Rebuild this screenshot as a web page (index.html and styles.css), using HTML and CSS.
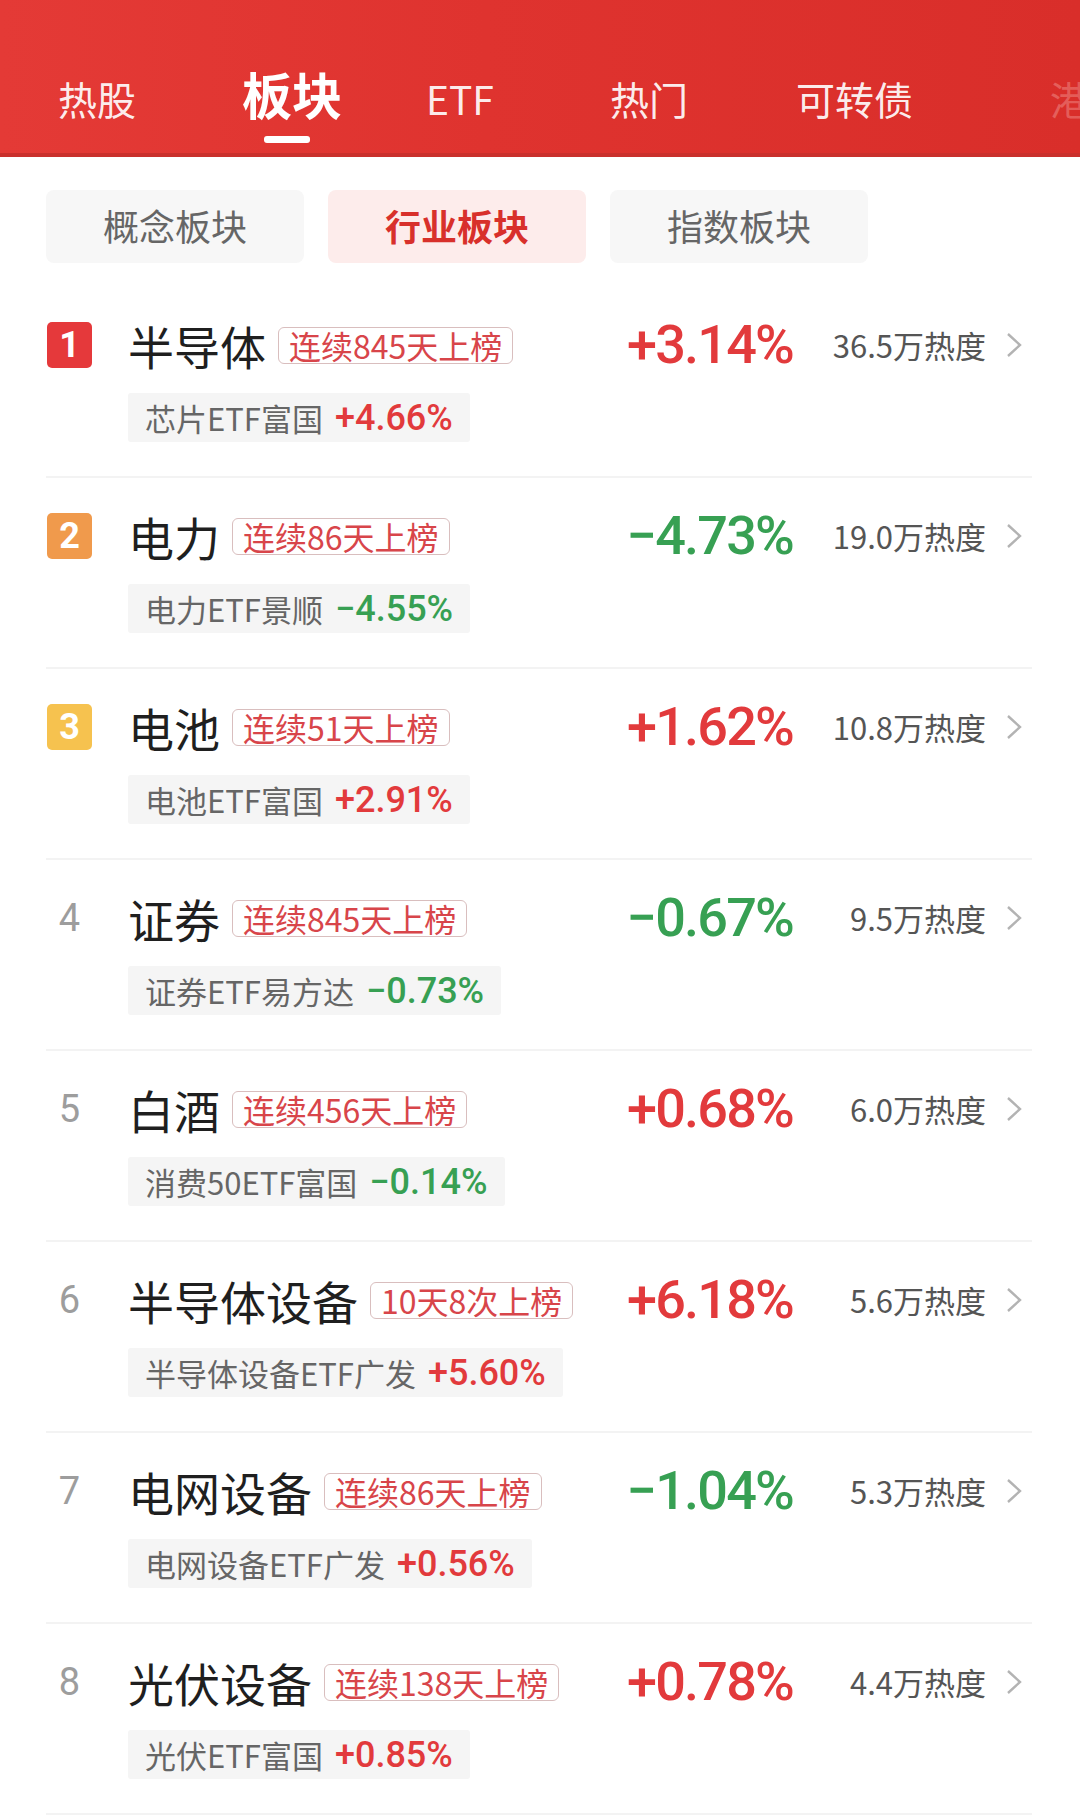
FILE: index.html
```html
<!DOCTYPE html>
<html lang="zh-CN">
<head>
<meta charset="utf-8">
<title>板块</title>
<link rel="stylesheet" href="styles.css">
</head>
<body>
<div class="header">
  <div class="tabs">
    <span class="tab">热股</span>
    <span class="tab tab-active">板块</span>
    <span class="tab tab-etf">ETF</span>
    <span class="tab tab-hot">热门</span>
    <span class="tab tab-bond">可转债</span>
    <span class="tab tab-hk">港股</span>
  </div>
  <div class="fade"></div>
</div>

<div class="subtabs">
  <div class="subtab">概念板块</div>
  <div class="subtab subtab-active">行业板块</div>
  <div class="subtab">指数板块</div>
</div>

<div class="list">
  <div class="row">
    <div class="line">
      <div class="rank"><span class="badge badge-1">1</span></div>
      <span class="name">半导体</span><span class="tag">连续845天上榜</span>
      <span class="spacer"></span>
      <span class="pct up">+3.14%</span>
      <span class="heat">36.5万热度</span>
      <svg class="chev" viewBox="0 0 16 26"><path d="M2 2 L14 13 L2 24" fill="none" stroke="#b3b3b3" stroke-width="2.4"/></svg>
    </div>
    <div class="sub"><span class="sub-label">芯片ETF富国</span><span class="sub-pct up">+4.66%</span></div>
  </div>

  <div class="row">
    <div class="line">
      <div class="rank"><span class="badge badge-2">2</span></div>
      <span class="name">电力</span><span class="tag">连续86天上榜</span>
      <span class="spacer"></span>
      <span class="pct down">−4.73%</span>
      <span class="heat">19.0万热度</span>
      <svg class="chev" viewBox="0 0 16 26"><path d="M2 2 L14 13 L2 24" fill="none" stroke="#b3b3b3" stroke-width="2.4"/></svg>
    </div>
    <div class="sub"><span class="sub-label">电力ETF景顺</span><span class="sub-pct down">−4.55%</span></div>
  </div>

  <div class="row">
    <div class="line">
      <div class="rank"><span class="badge badge-3">3</span></div>
      <span class="name">电池</span><span class="tag">连续51天上榜</span>
      <span class="spacer"></span>
      <span class="pct up">+1.62%</span>
      <span class="heat">10.8万热度</span>
      <svg class="chev" viewBox="0 0 16 26"><path d="M2 2 L14 13 L2 24" fill="none" stroke="#b3b3b3" stroke-width="2.4"/></svg>
    </div>
    <div class="sub"><span class="sub-label">电池ETF富国</span><span class="sub-pct up">+2.91%</span></div>
  </div>

  <div class="row">
    <div class="line">
      <div class="rank"><span class="num">4</span></div>
      <span class="name">证券</span><span class="tag">连续845天上榜</span>
      <span class="spacer"></span>
      <span class="pct down">−0.67%</span>
      <span class="heat">9.5万热度</span>
      <svg class="chev" viewBox="0 0 16 26"><path d="M2 2 L14 13 L2 24" fill="none" stroke="#b3b3b3" stroke-width="2.4"/></svg>
    </div>
    <div class="sub"><span class="sub-label">证券ETF易方达</span><span class="sub-pct down">−0.73%</span></div>
  </div>

  <div class="row">
    <div class="line">
      <div class="rank"><span class="num">5</span></div>
      <span class="name">白酒</span><span class="tag">连续456天上榜</span>
      <span class="spacer"></span>
      <span class="pct up">+0.68%</span>
      <span class="heat">6.0万热度</span>
      <svg class="chev" viewBox="0 0 16 26"><path d="M2 2 L14 13 L2 24" fill="none" stroke="#b3b3b3" stroke-width="2.4"/></svg>
    </div>
    <div class="sub"><span class="sub-label">消费50ETF富国</span><span class="sub-pct down">−0.14%</span></div>
  </div>

  <div class="row">
    <div class="line">
      <div class="rank"><span class="num">6</span></div>
      <span class="name">半导体设备</span><span class="tag">10天8次上榜</span>
      <span class="spacer"></span>
      <span class="pct up">+6.18%</span>
      <span class="heat">5.6万热度</span>
      <svg class="chev" viewBox="0 0 16 26"><path d="M2 2 L14 13 L2 24" fill="none" stroke="#b3b3b3" stroke-width="2.4"/></svg>
    </div>
    <div class="sub"><span class="sub-label">半导体设备ETF广发</span><span class="sub-pct up">+5.60%</span></div>
  </div>

  <div class="row">
    <div class="line">
      <div class="rank"><span class="num">7</span></div>
      <span class="name">电网设备</span><span class="tag">连续86天上榜</span>
      <span class="spacer"></span>
      <span class="pct down">−1.04%</span>
      <span class="heat">5.3万热度</span>
      <svg class="chev" viewBox="0 0 16 26"><path d="M2 2 L14 13 L2 24" fill="none" stroke="#b3b3b3" stroke-width="2.4"/></svg>
    </div>
    <div class="sub"><span class="sub-label">电网设备ETF广发</span><span class="sub-pct up">+0.56%</span></div>
  </div>

  <div class="row">
    <div class="line">
      <div class="rank"><span class="num">8</span></div>
      <span class="name">光伏设备</span><span class="tag">连续138天上榜</span>
      <span class="spacer"></span>
      <span class="pct up">+0.78%</span>
      <span class="heat">4.4万热度</span>
      <svg class="chev" viewBox="0 0 16 26"><path d="M2 2 L14 13 L2 24" fill="none" stroke="#b3b3b3" stroke-width="2.4"/></svg>
    </div>
    <div class="sub"><span class="sub-label">光伏ETF富国</span><span class="sub-pct up">+0.85%</span></div>
  </div>
</div>
</body>
</html>
```

FILE: styles.css
```css
* { box-sizing: border-box; }
html, body {
  margin: 0;
  padding: 0;
  background: #ffffff;
  font-family: "Noto Sans CJK SC", "Noto Sans", sans-serif;
  width: 1080px;
  overflow: hidden;
}

.header {
  position: relative;
  height: 157px;
  background: linear-gradient(90deg, #e43a36 0%, #df332f 45%, #d92e2a 100%);
  border-bottom: 4px solid #c9302c;
  overflow: hidden;
}
.tabs {
  display: flex;
  align-items: flex-end;
  height: 118px;
  padding-left: 58px;
  white-space: nowrap;
}
.tab {
  position: relative;
  color: rgba(255, 255, 255, 0.93);
  font-size: 39px;
  line-height: 1;
  margin-left: 108px;
  flex-shrink: 0;
}
.tab:first-child { margin-left: 0; }
.tab-active {
  font-size: 50px;
  font-weight: 700;
  color: #ffffff;
  margin-left: 106px;
}
.tab-active::after {
  content: "";
  position: absolute;
  left: 22px;
  bottom: -25px;
  width: 46px;
  height: 7px;
  border-radius: 3px;
  background: #ffffff;
}
.tab-etf { margin-left: 84px; }
.tab-hot { margin-left: 116px; }
.tab-bond { margin-left: 108px; }
.tab-hk { margin-left: 137px; color: rgba(255, 210, 205, 0.7); }
.fade {
  position: absolute;
  top: 0;
  right: 0;
  width: 90px;
  height: 100%;
  background: linear-gradient(90deg, rgba(217, 46, 42, 0) 0%, rgba(217, 46, 42, 0.55) 60%, rgba(217, 46, 42, 0.6) 100%);
}

.subtabs {
  display: flex;
  gap: 24px;
  padding: 33px 46px 0;
}
.subtab {
  width: 258px;
  height: 73px;
  line-height: 71px;
  text-align: center;
  background: #f7f7f7;
  border-radius: 8px;
  color: #666666;
  font-size: 36px;
}
.subtab-active {
  background: #fdeceb;
  color: #d8302b;
  font-weight: 700;
}

.list {
  margin: 24px 48px 0 46px;
}
.row {
  padding: 30px 0 34px;
  border-bottom: 2px solid #f3f3f3;
}
.line {
  display: flex;
  align-items: center;
  height: 56px;
}
.rank {
  width: 47px;
  display: flex;
  justify-content: center;
  align-items: center;
  margin-right: 35px;
}
.badge {
  width: 45px;
  height: 46px;
  border-radius: 5px;
  color: #ffffff;
  font-family: Roboto, "Noto Sans", sans-serif;
  font-weight: 700;
  font-size: 36px;
  line-height: 46px;
  text-align: center;
}
.badge-1 { background: #e5393b; }
.badge-2 { background: #f09a4c; }
.badge-3 { background: #f6c24f; }
.num {
  color: #9d9d9d;
  font-family: Roboto, "Noto Sans", sans-serif;
  font-size: 38px;
  line-height: 46px;
}
.name {
  font-size: 46px;
  line-height: 56px;
  color: #1f1f1f;
  white-space: nowrap;
}
.tag {
  margin-left: 12px;
  border: 1.5px solid #d9bebe;
  border-radius: 6px;
  padding: 0 10px;
  color: #d8454a;
  font-size: 32px;
  line-height: 35px;
  white-space: nowrap;
}
.spacer { flex: 1; }
.pct {
  font-family: Roboto, "Noto Sans", sans-serif;
  font-weight: 500;
  font-size: 54px;
  letter-spacing: -1.8px;
  line-height: 56px;
  white-space: nowrap;
}
.up { color: #e23a3c; }
.down { color: #37a053; }
.heat {
  width: 193px;
  text-align: right;
  color: #555555;
  font-size: 31px;
  line-height: 56px;
  white-space: nowrap;
}
.chev {
  width: 16px;
  height: 26px;
  margin-left: 20px;
  margin-right: 10px;
}
.sub {
  display: inline-flex;
  align-items: center;
  margin-top: 20px;
  margin-left: 82px;
  height: 49px;
  padding: 0 17px;
  background: #f5f5f5;
  border-radius: 3px;
}
.sub-label {
  color: #666666;
  font-size: 31px;
  white-space: nowrap;
}
.sub-pct {
  margin-left: 12px;
  font-family: Roboto, "Noto Sans", sans-serif;
  font-weight: 500;
  font-size: 36px;
  white-space: nowrap;
}
```
